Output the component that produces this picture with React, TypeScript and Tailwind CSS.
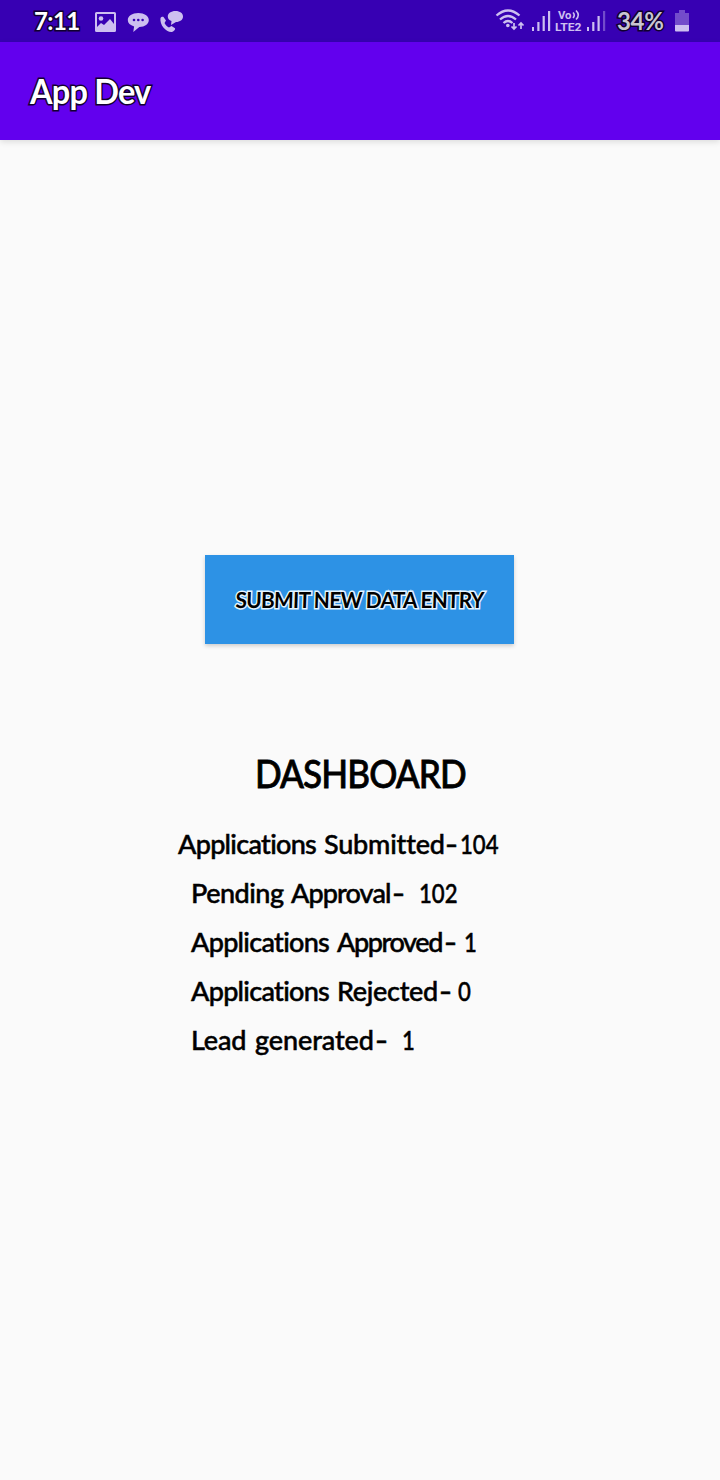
import type { ReactNode } from 'react';

const stats = [
  {
    indent: 'pl-[178px]',
    words: [
      { text: 'Applications', className: 'w-[146px] tracking-[-0.7px]' },
      { text: 'Submitted', className: 'w-[121px] tracking-[-0.2px]' },
    ],
    value: '104',
    gap: 'ml-[1px]',
  },
  {
    indent: 'pl-[191px]',
    words: [
      { text: 'Pending', className: 'w-[100px] tracking-[-0.5px]' },
      { text: 'Approval', className: 'w-[101px] tracking-[-0.9px]' },
    ],
    value: '102',
    gap: 'ml-[13px]',
  },
  {
    indent: 'pl-[191px]',
    words: [
      { text: 'Applications', className: 'w-[146px] tracking-[-0.7px]' },
      { text: 'Approved', className: 'w-[107px] tracking-[-1.4px]' },
    ],
    value: '1',
    gap: 'ml-[6px]',
  },
  {
    indent: 'pl-[191px]',
    words: [
      { text: 'Applications', className: 'w-[146px] tracking-[-0.7px]' },
      { text: 'Rejected', className: 'w-[102px] tracking-[-0.3px]' },
    ],
    value: '0',
    gap: 'ml-[5px]',
  },
  {
    indent: 'pl-[191px]',
    words: [
      { text: 'Lead', className: 'w-[64px] tracking-[-0.2px]' },
      { text: 'generated', className: 'w-[120px] tracking-[-0.1px]' },
    ],
    value: '1',
    gap: 'ml-[13px]',
  },
];

function Outlined({ children, className }: { children: ReactNode; className: string }) {
  return <span className={`whitespace-nowrap [paint-order:stroke_fill] ${className}`}>{children}</span>;
}

function StatusBar() {
  return (
    <header className="flex h-[42px] items-center bg-[#3700b3] pr-[31px] pl-[34px] text-[#cdbff0]">
      <Outlined className="w-[60px] text-[24px] leading-[44px] font-bold tracking-[-0.6px] text-white [-webkit-text-stroke:3px_#10002f]">
        7:11
      </Outlined>
      <svg className="h-[42px] w-[90px]" viewBox="94 0 90 42" fill="currentColor">
        <path fillRule="evenodd" d="M96.5 12h18a1.500 1.500 0 0 1 1.500 1.500v17a1.500 1.500 0 0 1-1.500 1.500h-18a1.500 1.500 0 0 1-1.500-1.500v-17a1.500 1.500 0 0 1 1.500-1.500Zm.5 2v13l4-4 3 2 6-6 4 5V14Z" />
        <circle cx="101" cy="18.500" r="2.300" />
        <path d="M138.300 13c6 0 10.500 3 10.500 7s-4 7-9.500 7l-6 5 .8-5.600c-4-1.200-6.300-3.300-6.300-6.400 0-4 4.500-7 10.500-7Z" />
        <g fill="#3700b3">
          <circle cx="134" cy="20" r="1.300" />
          <circle cx="138.300" cy="20" r="1.300" />
          <circle cx="142.600" cy="20" r="1.300" />
        </g>
        <path d="M175.500 11c4.500 0 7.500 2.300 7.500 5.500s-3 5.500-7 5.500l-5 3 .5-4c-2.500-1-3.700-2.500-3.700-4.500 0-3.200 3.200-5.500 7.700-5.500Z" />
        <path d="M160.500 18c.7-1 2-1.500 3-1l2.500 3.500-1.500 2.500c1.200 2 2.500 3.500 4.500 4.500l2.500-1.500 3.500 2.300c.6 1-1 3.200-3 3.700-6 .5-12.500-7-11.500-14Z" />
      </svg>
      <svg className="ml-auto h-[42px] w-[111px]" viewBox="495 0 111 42" fill="currentColor">
        <g fill="none" stroke="currentColor" strokeWidth="2.300">
          <path d="M496.500 15.500q11.500-10 23 0M500 19.500q8-7 16 0M503.500 23q4.500-4 9 0" />
          <path strokeWidth="1.700" d="M514 23v6m-2.500-2.500 2.500 2.500 2.500-2.500M521 29v-6m-2.500 2.500 2.500-2.500 2.500 2.500" />
        </g>
        <circle cx="507.800" cy="25.500" r="1.800" />
        <path d="M532 27h2v4h-2ZM537.300 22h2.200v9h-2.200ZM542.600 16h2.200v15h-2.200ZM548 11h2.200v20H548Z" />
        <text x="558" y="18.500" textLength="13.500" lengthAdjust="spacingAndGlyphs" fontFamily="Roboto" fontWeight="700" fontSize="10.500">Vo</text>
        <path fill="none" stroke="currentColor" strokeWidth="1.600" d="M573 12.500q2.500 2.700 0 5.500M576 10.500q4.500 4.500 0 9" />
        <text x="555" y="31" textLength="26.500" lengthAdjust="spacingAndGlyphs" fontFamily="Roboto" fontWeight="700" fontSize="11.500">LTE2</text>
        <path d="M587 27h2v4h-2ZM592.200 22h2.200v9h-2.200ZM597.500 16h2.200v15h-2.200Z" />
        <path opacity=".4" d="M603 11h2.200v20H603Z" />
      </svg>
      <Outlined className="ml-[11px] w-[47px] text-[24px] leading-[44px] font-bold tracking-[-0.3px] text-[#c9c5d1] [-webkit-text-stroke:3px_#10002f]">
        34%
      </Outlined>
      <svg className="ml-[11px] h-[42px] w-[14px]" viewBox="675 0 14 42" fill="currentColor">
        <path opacity=".4" d="M679 10h6v3h4v12h-14V13h4Z" />
        <path d="M675 25h14v5.500q0 1-1 1h-12q-1 0-1-1Z" />
      </svg>
    </header>
  );
}

export default function App() {
  return (
    <div className="flex h-[1480px] w-[720px] flex-col overflow-hidden bg-[#fafafa] font-['Lato',sans-serif] text-black [font-variant-ligatures:none]">
      <StatusBar />
      <div className="flex h-[98px] shrink-0 items-center bg-[#6200ee] pl-[30px] shadow-[0_2px_6px_rgba(0,0,0,0.12)]">
        <Outlined className="origin-left scale-x-[0.955] text-[34px] leading-[98px] font-bold tracking-[-0.8px] text-white [-webkit-text-stroke:3px_#130032]">
          App Dev
        </Outlined>
      </div>
      <main className="flex flex-col">
        <button className="mt-[415px] ml-[205px] flex h-[89px] w-[309px] items-center justify-center bg-[#2d92e5] shadow-[0_2px_4px_rgba(0,0,0,0.18)]">
          <Outlined className="scale-x-[0.95] -skew-x-2 text-[22px] font-bold tracking-[-0.8px] [-webkit-text-stroke:3px_#e5f5ff]">
            SUBMIT NEW DATA ENTRY
          </Outlined>
        </button>
        <h1 className="mt-[104px] ml-[255px] h-[50px] w-max origin-left scale-x-[0.9] text-[39px] leading-[50px] font-medium tracking-[-1px] whitespace-nowrap [-webkit-text-stroke:0.8px_black]">
          DASHBOARD
        </h1>
        <ul className="mt-[22px]">
          {stats.map((s) => (
            <li
              key={s.words.map((w) => w.text).join(' ')}
              className={`flex h-[49px] items-center text-[27px] font-medium whitespace-pre [-webkit-text-stroke:0.5px_black] ${s.indent}`}
            >
              {s.words.map((w) => (
                <span key={w.text} className={w.className}>{w.text}</span>
              ))}
              <span className="w-[14px] origin-left scale-x-[1.3]">-</span>
              <span className={`origin-left scale-x-[0.82] ${s.gap}`}>{s.value}</span>
            </li>
          ))}
        </ul>
      </main>
    </div>
  );
}
